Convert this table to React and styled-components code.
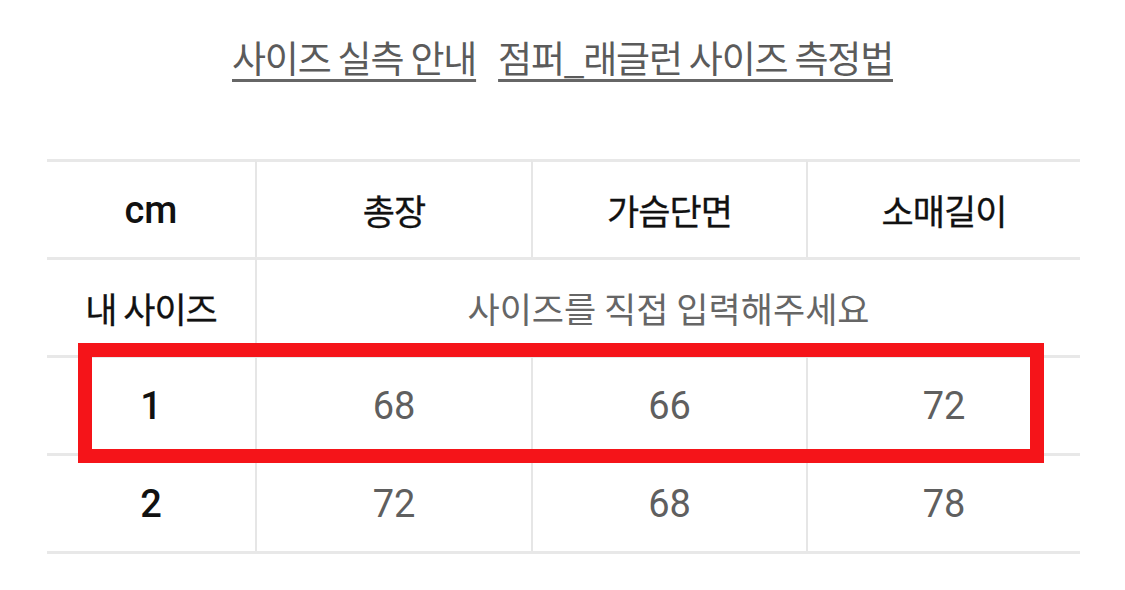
import React from "react";
import styled, { createGlobalStyle } from "styled-components";

const GlobalStyle = createGlobalStyle`
  body {
    margin: 0;
    background: #ffffff;
    font-family: "Noto Sans CJK KR", "Noto Sans", sans-serif;
  }
`;

const headers = ["총장", "가슴단면", "소매길이"];
const rows = [
  { label: "1", values: ["68", "66", "72"] },
  { label: "2", values: ["72", "68", "78"] },
];

const App = () => {
  return (
    <>
      <GlobalStyle />
      <Page>
        <LinkBar>
          <GuideLink>사이즈 실측 안내</GuideLink>
          <GuideLink>점퍼_래글런 사이즈 측정법</GuideLink>
        </LinkBar>
        <Table>
          <Cell $first>
            <Latin $strong>cm</Latin>
          </Cell>
          {headers.map((h) => (
            <Cell key={h}>
              <HeadText>{h}</HeadText>
            </Cell>
          ))}
          <Cell $first>
            <HeadText>내 사이즈</HeadText>
          </Cell>
          <Cell $span={3}>
            <Hint>사이즈를 직접 입력해주세요</Hint>
          </Cell>
          {rows.map((r) => (
            <React.Fragment key={r.label}>
              <Cell $first>
                <Latin $strong>{r.label}</Latin>
              </Cell>
              {r.values.map((v, i) => (
                <Cell key={i}>
                  <Latin>{v}</Latin>
                </Cell>
              ))}
            </React.Fragment>
          ))}
          <Highlight />
        </Table>
      </Page>
    </>
  );
};
export default App;

const Page = styled.div`
  width: 1125px;
  height: 590px;
  overflow: hidden;
`;

const LinkBar = styled.div`
  display: flex;
  justify-content: center;
  gap: 22px;
  height: 159px;
  padding-top: 32px;
  box-sizing: border-box;
`;

const GuideLink = styled.span`
  color: #5b5b5b;
  font-size: 37px;
  letter-spacing: -1.2px;
  line-height: 50px;
  height: 50px;
  text-decoration: underline;
  text-decoration-thickness: 3px;
  text-underline-offset: 6px;
  text-decoration-color: #666666;
`;

const Table = styled.div`
  position: relative;
  margin-left: 47px;
  width: 1033px;
  display: grid;
  grid-template-columns: 208px 276px 275px 274px;
  grid-auto-rows: 98px;
  border-bottom: 3px solid #e8e8e8;
`;

const Cell = styled.div`
  display: flex;
  align-items: center;
  justify-content: center;
  border-top: 3px solid #e8e8e8;
  border-left: ${(p) => (p.$first ? "none" : "2px solid #e6e6e6")};
  grid-column: ${(p) => (p.$span ? `span ${p.$span}` : "auto")};
  box-sizing: border-box;
`;

const HeadText = styled.span`
  color: #111111;
  font-size: 35px;
  font-weight: 400;
  -webkit-text-stroke: 0.3px #111111;
  letter-spacing: -1px;
`;

const Hint = styled.span`
  color: #666666;
  font-size: 35px;
  letter-spacing: 0;
`;

const Latin = styled.span`
  font-family: Roboto, "Liberation Sans", sans-serif;
  font-size: 38px;
  color: ${(p) => (p.$strong ? "#111111" : "#5f5f5f")};
  font-weight: ${(p) => (p.$strong ? 500 : 400)};
`;

const Highlight = styled.div`
  position: absolute;
  left: 31px;
  top: 184px;
  width: 966px;
  height: 120px;
  border: 14px solid #f51419;
  box-sizing: border-box;
  pointer-events: none;
`;
